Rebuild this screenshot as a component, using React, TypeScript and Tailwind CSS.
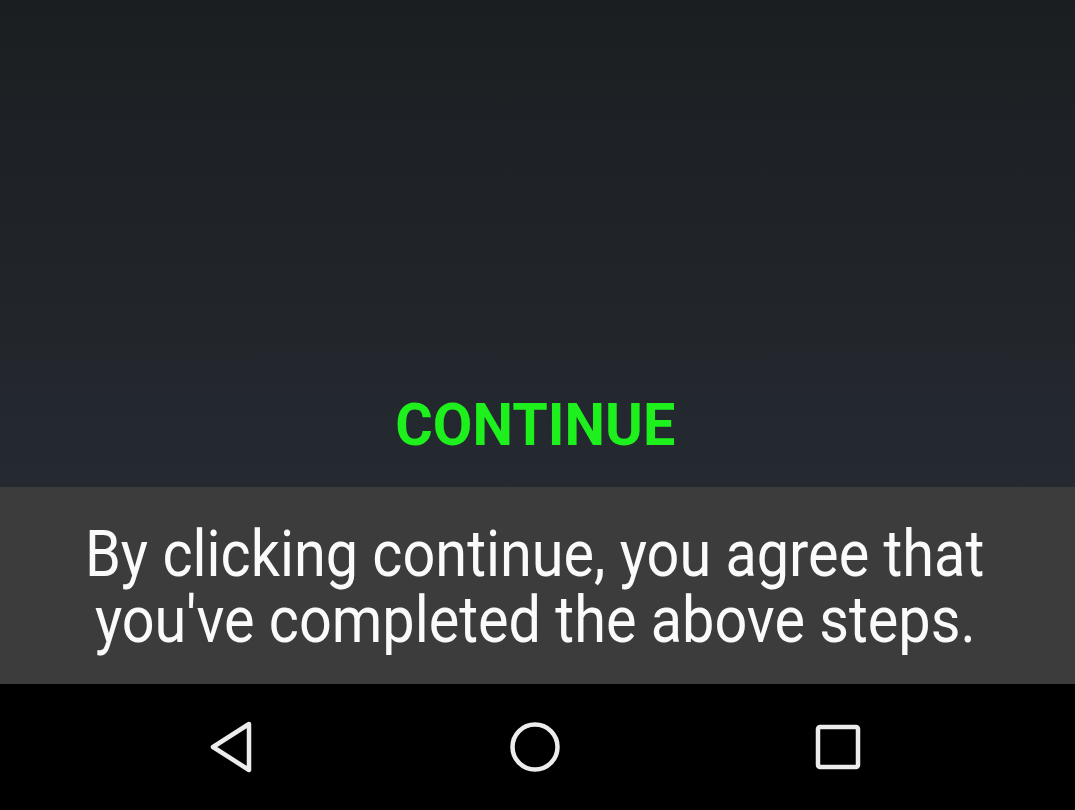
import React from "react";

export default function App() {
  return (
    <div className="w-[1075px] h-[810px] flex flex-col overflow-hidden" style={{ fontFamily: "Roboto, 'Liberation Sans', sans-serif" }}>
      <div className="h-[487px] flex flex-col justify-end items-center bg-gradient-to-b from-[#1b1e21] to-[#252a31] pb-[32px] pr-[4px]">
        <div className="text-[60px] leading-[60px] font-bold text-[#1df01c] scale-x-[0.957] origin-center">CONTINUE</div>
      </div>
      <div className="h-[197px] bg-[#3c3c3c] flex flex-col items-center justify-center text-[#fafafa] pt-[4px] pr-[5px]">
        <div className="text-[64px] leading-[66px] whitespace-nowrap scale-x-[0.9] origin-center">By clicking continue, you agree that</div>
        <div className="text-[64px] leading-[66px] whitespace-nowrap scale-x-[0.9] origin-center">you've completed the above steps.</div>
      </div>
      <div className="h-[126px] bg-black flex items-center justify-center gap-[251px] pr-[5px]">
        <svg width="50" height="54" viewBox="0 0 50 54">
          <path d="M42 4 L6 27 L42 50 Z" fill="none" stroke="#ececec" strokeWidth="4.5" strokeLinejoin="round" />
        </svg>
        <svg width="54" height="54" viewBox="0 0 54 54">
          <circle cx="27" cy="27" r="22.5" fill="none" stroke="#ececec" strokeWidth="4.5" />
        </svg>
        <svg width="50" height="50" viewBox="0 0 50 50">
          <rect x="5" y="5" width="40" height="40" rx="2" fill="none" stroke="#ececec" strokeWidth="4.5" />
        </svg>
      </div>
    </div>
  );
}
